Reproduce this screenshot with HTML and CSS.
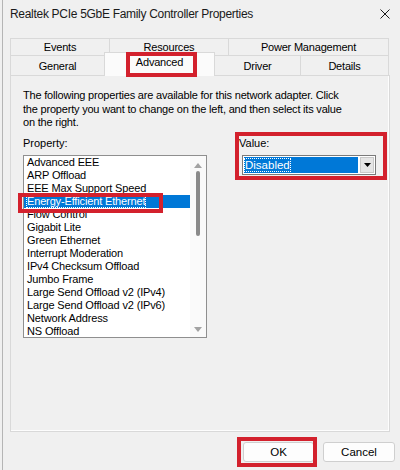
FILE: index.html
```html
<!DOCTYPE html>
<html>
<head>
<meta charset="utf-8">
<link rel="stylesheet" href="styles.css">
</head>
<body>
<div class="dialog">
  <div class="titlebar">
    <span class="title">Realtek PCIe 5GbE Family Controller Properties</span>
    <svg class="close" width="10" height="10" viewBox="0 0 10 10"><path d="M0.5 0.5 L9.5 9.5 M9.5 0.5 L0.5 9.5" stroke="#1a1a1a" stroke-width="1"/></svg>
  </div>
  <div class="tabs">
    <div class="tabrow back">
      <div class="tab t-events">Events</div>
      <div class="tab t-resources">Resources</div>
      <div class="tab t-power">Power Management</div>
    </div>
    <div class="tabrow front">
      <div class="tab t-general">General</div>
      <div class="tab t-advanced active">Advanced</div>
      <div class="tab t-driver">Driver</div>
      <div class="tab t-details">Details</div>
    </div>
  </div>
  <div class="panel">
    <p class="desc">The following properties are available for this network adapter. Click<br>the property you want to change on the left, and then select its value<br>on the right.</p>
    <div class="cols">
      <div class="propcol">
        <div class="label">Property:</div>
        <div class="listbox">
          <ul class="items">
            <li>Advanced EEE</li>
            <li>ARP Offload</li>
            <li>EEE Max Support Speed</li>
            <li class="sel"><span class="focus">Energy-Efficient Ethernet</span></li>
            <li>Flow Control</li>
            <li>Gigabit Lite</li>
            <li>Green Ethernet</li>
            <li>Interrupt Moderation</li>
            <li>IPv4 Checksum Offload</li>
            <li>Jumbo Frame</li>
            <li>Large Send Offload v2 (IPv4)</li>
            <li>Large Send Offload v2 (IPv6)</li>
            <li>Network Address</li>
            <li>NS Offload</li>
          </ul>
          <div class="vscroll">
            <svg class="arrow" width="8" height="5" viewBox="0 0 8 5"><path d="M0 5 L4 0 L8 5 Z" fill="#a3a3a3"/></svg>
            <div class="thumb"></div>
            <div class="spacer"></div>
            <svg class="arrow" width="8" height="5" viewBox="0 0 8 5"><path d="M0 0 L8 0 L4 5 Z" fill="#a3a3a3"/></svg>
          </div>
        </div>
      </div>
      <div class="valcol">
        <div class="label">Value:</div>
        <div class="combo">
          <div class="combo-field"><span class="combo-text">Disabled</span></div>
          <div class="combo-btn"><svg width="7" height="4" viewBox="0 0 7 4"><path d="M0 0 L7 0 L3.5 4 Z" fill="#000"/></svg></div>
        </div>
      </div>
    </div>
  </div>
  <div class="buttons">
    <button class="btn ok">OK</button>
    <button class="btn cancel">Cancel</button>
  </div>
  <div class="mark mark-tab"></div>
  <div class="mark mark-item"></div>
  <div class="mark mark-value"></div>
  <div class="mark mark-ok"></div>
</div>
</body>
</html>
```

FILE: styles.css
```css
html, body {
  margin: 0;
  padding: 0;
}
body {
  background: #f0f0f0;
  font-family: "Liberation Sans", Arial, sans-serif;
  font-size: 11px;
  color: #000;
}
.dialog {
  position: relative;
  height: 470px;
  box-sizing: border-box;
  border-left: 1px solid #b5b5b5;
  margin-left: 2px;
  width: 398px;
}
.titlebar {
  height: 28px;
  display: flex;
  align-items: center;
  justify-content: space-between;
  padding: 0 10px 0 7px;
}
.title {
  font-size: 12px;
  letter-spacing: -0.3px;
  color: #1a1a1a;
}
.close {
  display: block;
}
.tabs {
  margin: 10px 0 0 7px;
  width: 380px;
  position: relative;
  z-index: 1;
}
.tabrow {
  display: flex;
}
.tabrow.back {
  height: 17px;
}
.tabrow.front {
  height: 20px;
}
.tab {
  box-sizing: border-box;
  border: 1px solid #d9d9d9;
  border-bottom: none;
  margin-left: -1px;
  display: flex;
  align-items: center;
  justify-content: center;
  font-size: 11px;
  letter-spacing: -0.2px;
  color: #000;
  background: #f0f0f0;
}
.tab:first-child {
  margin-left: 0;
}
.t-events { width: 100px; }
.t-resources { width: 120px; }
.t-power { width: 161px; }
.t-general { width: 95px; }
.t-advanced { width: 111px; }
.t-driver { width: 87px; }
.t-details { width: 89px; }
.tab.active {
  background: #fbfbfb;
  margin-top: -3px;
  height: 24px;
  align-items: flex-start;
  padding-top: 3px;
}
.panel {
  margin-left: 7px;
  width: 380px;
  height: 357px;
  box-sizing: border-box;
  border: 1px solid #d9d9d9;
  box-shadow: inset -1px -1px 0 #fdfdfd;
  padding: 13px 12px 0 12px;
}
.desc {
  margin: 0;
  line-height: 13.5px;
  letter-spacing: -0.2px;
}
.cols {
  display: flex;
  margin-top: 7px;
}
.label {
  line-height: 13px;
  height: 13px;
}
.propcol .label {
  margin-bottom: 5px;
}
.listbox {
  width: 184px;
  height: 183px;
  box-sizing: border-box;
  border: 1px solid #8f8f8f;
  background: #fff;
  display: flex;
}
.items {
  list-style: none;
  margin: 0;
  padding: 0;
  flex: 1;
}
.items li {
  height: 13px;
  line-height: 13px;
  padding-left: 3px;
  white-space: nowrap;
  font-size: 11px;
  letter-spacing: -0.15px;
}
.items li.sel {
  background: #0078d7;
  color: #fff;
}
.items li.sel .focus {
  outline: 1px dotted #ffffff;
  outline-offset: 0;
}
.vscroll {
  width: 16px;
  display: flex;
  flex-direction: column;
  align-items: center;
  background: #fafafa;
  padding: 7px 0 5px;
  box-sizing: border-box;
}
.thumb {
  width: 4px;
  height: 65px;
  margin-top: 3px;
  background: #8a8a8a;
  border-radius: 2px;
}
.spacer {
  flex: 1;
}
.valcol {
  margin-left: 32px;
  display: flex;
  flex-direction: column;
}
.valcol .label {
  margin-bottom: 5px;
}
.combo {
  margin-left: 3px;
  width: 134px;
  height: 20px;
  box-sizing: border-box;
  border: 1px solid #7a7a7a;
  background: #fff;
  display: flex;
  padding: 1px;
}
.combo-field {
  flex: 1;
  background: #0078d7;
  display: flex;
  align-items: center;
  padding-left: 1px;
}
.combo-text {
  color: #fff;
  font-size: 11.5px;
  outline: 1px dotted #ffffff;
}
.combo-btn {
  width: 14px;
  margin-left: 2px;
  background: #e5e5e5;
  border: 1px solid #c9c9c9;
  box-sizing: border-box;
  display: flex;
  align-items: center;
  justify-content: center;
}
.combo-btn svg {
  display: block;
}
.buttons {
  display: flex;
  justify-content: flex-end;
  gap: 9px;
  margin-top: 10px;
  padding-right: 5px;
}
.btn {
  height: 20px;
  box-sizing: border-box;
  border: 1px solid #cfcfcf;
  border-radius: 3px;
  background: #fdfdfd;
  font-family: "Liberation Sans", Arial, sans-serif;
  font-size: 11.5px;
  color: #000;
  padding: 0;
}
.btn.ok {
  width: 71px;
}
.btn.cancel {
  width: 72px;
}
.mark {
  position: absolute;
  box-sizing: border-box;
  border: 4px solid #d3212d;
  z-index: 5;
}
.mark-tab {
  left: 123px;
  top: 52px;
  width: 71px;
  height: 25px;
}
.mark-item {
  left: 15px;
  top: 193px;
  width: 145px;
  height: 20px;
}
.mark-value {
  left: 232px;
  top: 132px;
  width: 152px;
  height: 48px;
}
.mark-ok {
  left: 234px;
  top: 437px;
  width: 80px;
  height: 30px;
}
```
